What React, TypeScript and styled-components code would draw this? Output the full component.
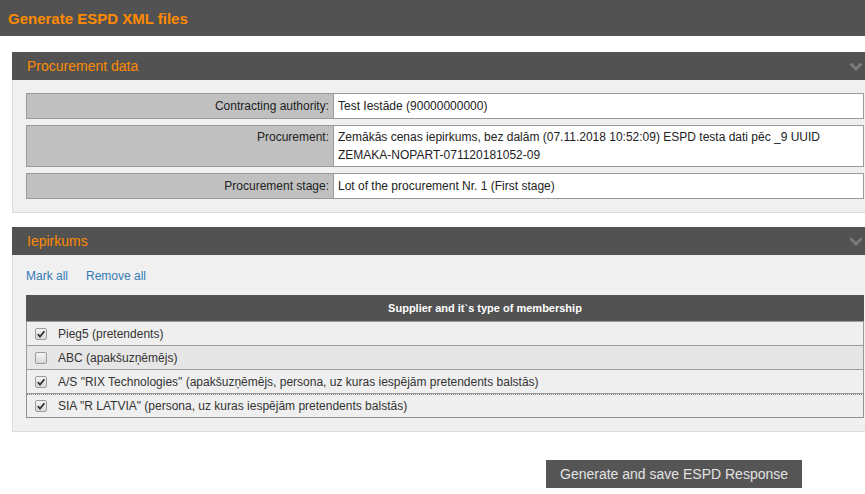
import React from "react";
import styled, { createGlobalStyle } from "styled-components";

const GlobalStyle = createGlobalStyle`
  html, body { margin: 0; padding: 0; background: #ffffff; overflow: hidden; }
  body { font-family: "Liberation Sans", Arial, sans-serif; color: #222; }
  * { box-sizing: border-box; }
`;

const TopBar = styled.header`
  height: 36px;
  background: #525252;
  display: flex;
  align-items: center;
  padding-left: 8px;
`;

const PageTitle = styled.h1`
  margin: 0;
  font-size: 15px;
  font-weight: bold;
  color: #ff8a00;
`;

const Main = styled.main`
  padding: 16px 0 0 12px;
`;

const Panel = styled.section`
  width: 866px;
  margin-bottom: 14px;
`;

const PanelHeader = styled.div`
  height: 28px;
  background: #525252;
  display: flex;
  align-items: center;
  justify-content: space-between;
  padding: 0 15px 0 15px;
`;

const PanelTitle = styled.h2`
  margin: 0;
  font-size: 14px;
  font-weight: normal;
  color: #ff8a00;
`;

const PanelBody = styled.div`
  background: #f0f0f0;
  border: 1px solid #dcdcdc;
  border-top: none;
  padding: 13px 13px 13px 13px;
`;

const InfoRow = styled.div`
  display: grid;
  grid-template-columns: 307px 1fr;
  border: 1px solid #9a9a9a;
  margin-bottom: 6px;
  font-size: 12px;
  line-height: 18px;
  &:last-child { margin-bottom: 0; }
`;

const InfoLabel = styled.div<{ $tight?: boolean }>`
  background: #c0c0c0;
  text-align: right;
  padding: ${(p) => (p.$tight ? "2px 4px" : "3px 4px")};
  border-right: 1px solid #9a9a9a;
  color: #222;
`;

const InfoValue = styled.div<{ $tight?: boolean }>`
  background: #ffffff;
  padding: ${(p) => (p.$tight ? "2px 4px" : "3px 4px")};
  color: #222;
`;

const LinkBar = styled.div`
  display: flex;
  gap: 18px;
  font-size: 12px;
  line-height: 16px;
  margin-bottom: 11px;
`;

const TextLink = styled.a`
  color: #337ab7;
  text-decoration: none;
  cursor: pointer;
`;

const SupplierTable = styled.div`
  width: 838px;
  font-size: 12px;
`;

const TableHead = styled.div`
  height: 27px;
  background: #525252;
  border-bottom: 1px solid #9a9a9a;
  color: #ffffff;
  font-size: 11px;
  font-weight: bold;
  display: flex;
  align-items: center;
  justify-content: center;
  padding-left: 80px;
`;

const SupplierRow = styled.label<{ $alt?: boolean; $focus?: boolean }>`
  height: 24px;
  display: flex;
  align-items: center;
  gap: 11px;
  padding-left: 8px;
  background: ${(p) => (p.$alt ? "#e6e6e6" : "#efefef")};
  border: 1px solid #9a9a9a;
  border-top: none;
  color: #333;
  ${(p) => (p.$focus ? "outline: 1px dotted #888; outline-offset: -1px;" : "")}
`;

const Box = styled.span`
  width: 12px;
  height: 12px;
  border: 1px solid #9a9a9a;
  border-radius: 2px;
  background: linear-gradient(#f4f4f4, #d8d8d8);
  display: inline-flex;
  align-items: center;
  justify-content: center;
  flex: none;
`;

const Footer = styled.div`
  display: flex;
  padding: 14px 0 0 534px;
`;

const ActionButton = styled.button`
  height: 28px;
  padding: 0 14px;
  border: none;
  background: #555555;
  color: #e2e2e2;
  font-family: "Liberation Sans", Arial, sans-serif;
  font-size: 14px;
  cursor: pointer;
`;

const Chevron = () => (
  <svg width="14" height="9" viewBox="0 0 14 9">
    <path d="M1.5 1.5 L7 7 L12.5 1.5" fill="none" stroke="#7a7a7a" strokeWidth="3" />
  </svg>
);

const Checkbox = ({ checked }: { checked: boolean }) => (
  <Box>
    {checked && (
      <svg width="10" height="10" viewBox="0 0 10 10">
        <path d="M1.8 5.2 L4 7.6 L8.4 2.2" fill="none" stroke="#333" strokeWidth="1.8" />
      </svg>
    )}
  </Box>
);

const suppliers = [
  { name: "Pieg5 (pretendents)", checked: true },
  { name: "ABC (apakšuzņēmējs)", checked: false, alt: true },
  { name: "A/S \"RIX Technologies\" (apakšuzņēmējs, persona, uz kuras iespējām pretendents balstās)", checked: true },
  { name: "SIA \"R LATVIA\" (persona, uz kuras iespējām pretendents balstās)", checked: true, focus: true },
];

export default function App() {
  return (
    <>
      <GlobalStyle />
      <TopBar>
        <PageTitle>Generate ESPD XML files</PageTitle>
      </TopBar>
      <Main>
        <Panel>
          <PanelHeader>
            <PanelTitle>Procurement data</PanelTitle>
            <Chevron />
          </PanelHeader>
          <PanelBody>
            <InfoRow>
              <InfoLabel>Contracting authority:</InfoLabel>
              <InfoValue>Test Iestāde (90000000000)</InfoValue>
            </InfoRow>
            <InfoRow>
              <InfoLabel $tight>Procurement:</InfoLabel>
              <InfoValue $tight>
                Zemākās cenas iepirkums, bez dalām (07.11.2018 10:52:09) ESPD testa dati pēc _9 UUID
                <br />
                ZEMAKA-NOPART-071120181052-09
              </InfoValue>
            </InfoRow>
            <InfoRow>
              <InfoLabel>Procurement stage:</InfoLabel>
              <InfoValue>Lot of the procurement Nr. 1 (First stage)</InfoValue>
            </InfoRow>
          </PanelBody>
        </Panel>
        <Panel>
          <PanelHeader>
            <PanelTitle>Iepirkums</PanelTitle>
            <Chevron />
          </PanelHeader>
          <PanelBody>
            <LinkBar>
              <TextLink>Mark all</TextLink>
              <TextLink>Remove all</TextLink>
            </LinkBar>
            <SupplierTable>
              <TableHead>Supplier and it`s type of membership</TableHead>
              {suppliers.map((s) => (
                <SupplierRow key={s.name} $alt={s.alt} $focus={s.focus}>
                  <Checkbox checked={s.checked} />
                  <span>{s.name}</span>
                </SupplierRow>
              ))}
            </SupplierTable>
          </PanelBody>
        </Panel>
        <Footer>
          <ActionButton>Generate and save ESPD Response</ActionButton>
        </Footer>
      </Main>
    </>
  );
}
